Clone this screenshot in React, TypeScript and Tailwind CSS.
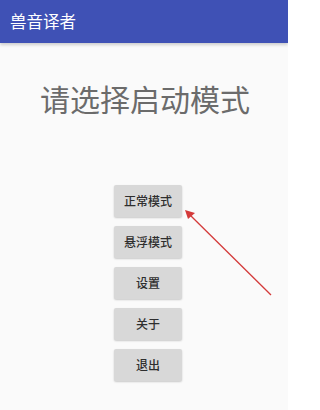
const buttons = ["正常模式", "悬浮模式", "设置", "关于", "退出"];

export default function App() {
  return (
    <div
      className="relative w-[288px] h-[410px] bg-[#fafafa] overflow-hidden"
      style={{ fontFamily: '"Noto Sans CJK SC", Roboto, sans-serif' }}
    >
      <header className="h-[43px] bg-[#3f51b5] flex items-center pl-[10px] shadow-[0_2px_3px_rgba(0,0,0,0.18)]">
        <span className="text-white text-[16.5px] leading-none">兽音译者</span>
      </header>

      <h1 className="mt-[37px] text-center text-[30px] leading-[36px] text-[#6b6b6b] pl-[2px]">
        请选择启动模式
      </h1>

      <div className="mt-[69px] flex flex-col items-center gap-[9px] pl-[8px]">
        {buttons.map((b) => (
          <button
            key={b}
            className="w-[68px] h-[32px] rounded-[2px] bg-[#d8d8d8] text-[12px] font-medium text-[#2e2e2e] shadow-[0_1px_2px_rgba(0,0,0,0.2)]"
          >
            {b}
          </button>
        ))}
      </div>

      <svg
        className="absolute left-0 top-0"
        width="288"
        height="410"
        viewBox="0 0 288 410"
      >
        <line x1="271" y1="295" x2="190" y2="215" stroke="#d43a3a" strokeWidth="1.3" />
        <polygon points="185,210 195,213 188,219" fill="#d43a3a" />
      </svg>
    </div>
  );
}
